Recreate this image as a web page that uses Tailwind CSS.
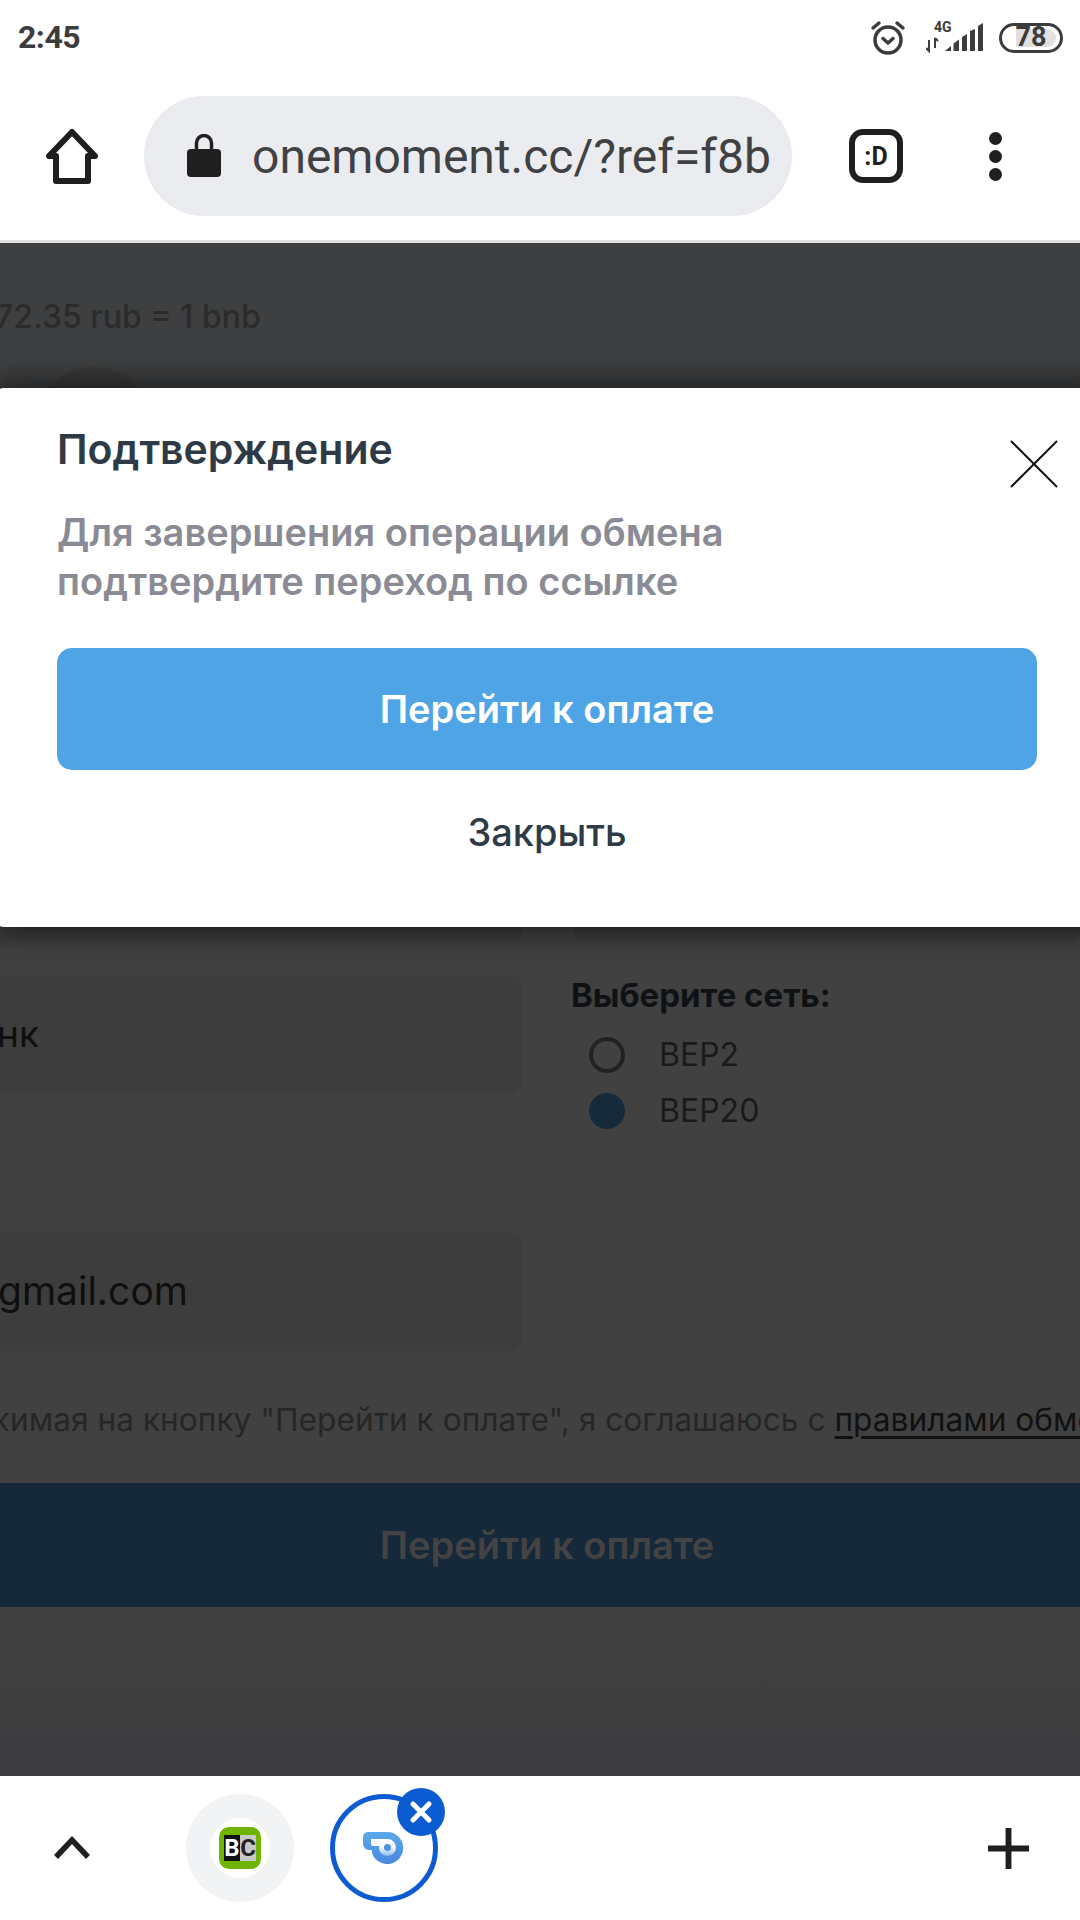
<!DOCTYPE html>
<html lang="ru">
<head>
<meta charset="utf-8">
<script src="https://cdn.jsdelivr.net/npm/@tailwindcss/browser@4"></script>
</head>
<body class="m-0 bg-white">
<div class="relative w-[1080px] h-[1920px] overflow-hidden bg-white flex flex-col font-['Roboto',sans-serif]">

  <!-- status bar -->
  <div class="h-[72px] flex items-center justify-between pl-[18px] pr-[17px] pt-[1px] shrink-0">
    <span class="text-[32px] font-bold text-[#3c3c3c] tracking-[-0.5px]">2:45</span>
    <div class="flex items-center pt-[2px]">
      <svg class="w-[36px] h-[36px]" viewBox="0 0 36 36" fill="none" stroke="#3c3c3c" stroke-width="3.5" stroke-linecap="round" stroke-linejoin="round"><circle cx="18" cy="20" r="13"/><path d="M13 18.500l5 4.500 5-4.500"/><path d="M3 8l6-5M33 8l-6-5"/></svg>
      <svg class="w-[60px] h-[36px] ml-[20px]" viewBox="0 0 60 36">
        <text x="8" y="12" font-family="Roboto" font-weight="700" font-size="14" fill="#3c3c3c">4G</text>
        <path d="M3 20v11M0 28l3 3 0-8M9 18v10M9 18l3 3" stroke="#3c3c3c" stroke-width="2" fill="none"/>
        <path d="M19 31l6-5v5zM27.500 23.500l5.500-4v11.500h-5.500zM36 17l5-3v17h-5zM44 11l5-2v22h-5zM52 6l5-3v28h-5z" fill="#3c3c3c"/>
      </svg>
      <div class="relative w-[64px] h-[30px] ml-[13px] rounded-full border-[3px] border-[#3c3c3c] flex items-center justify-center overflow-hidden">
        <div class="absolute left-[14px] top-[3px] bottom-[3px] w-[40px] bg-[#e0e0e0] rounded-r-full"></div>
        <span class="relative text-[27px] leading-none font-bold text-[#3c3c3c]">78</span>
      </div>
    </div>
  </div>

  <!-- browser toolbar -->
  <div class="h-[168px] flex items-center shrink-0 border-b-[3px] border-[#e2e3e1] box-content">
    <div class="w-[144px] flex justify-center">
      <svg class="w-[56px] h-[56px]" viewBox="0 0 56 56" fill="none" stroke="#1f1f1f" stroke-width="6" stroke-linejoin="round"><path d="M28 4L5 28h7v25h32V28h7z"/></svg>
    </div>
    <div class="w-[648px] h-[120px] rounded-full bg-[#ebecef] flex items-center">
      <svg class="w-[34px] h-[44px] ml-[43px]" viewBox="0 0 34 44"><path d="M9.500 18v-9a7.500 7.500 0 0 1 15 0v9" fill="none" stroke="#1f1f1f" stroke-width="3.500"/><rect x="0" y="15" width="34" height="28" rx="4" fill="#1f1f1f"/></svg>
      <span class="ml-[31px] pt-[2px] text-[48px] leading-none text-[#3f4144] whitespace-nowrap">onemoment.cc/?ref=f8b</span>
    </div>
    <div class="ml-[57px] w-[54px] h-[54px] rounded-[14px] border-[6px] border-[#1f1f1f] flex items-center justify-center">
      <span class="text-[25px] font-bold text-[#1f1f1f] leading-none">:D</span>
    </div>
    <div class="ml-[86px] flex flex-col gap-[5px]">
      <span class="w-[13px] h-[13px] rounded-full bg-[#1f1f1f]"></span>
      <span class="w-[13px] h-[13px] rounded-full bg-[#1f1f1f]"></span>
      <span class="w-[13px] h-[13px] rounded-full bg-[#1f1f1f]"></span>
    </div>
  </div>

  <!-- dimmed page -->
  <div class="relative h-[1533px] shrink-0 overflow-hidden bg-gradient-to-b from-[#414141] via-[#414141] via-[91%] to-[#3b3c3e] font-['Inter','Noto_Sans',sans-serif]">
    <div class="h-[124px] bg-[#3e3f40] pt-[54px]">
      <p class="-ml-[5px] text-[32px] leading-[40px] font-medium text-[#2b2b2b] whitespace-nowrap">72.35 rub = 1 bnb</p>
    </div>
    <div class="h-[458px] bg-[#3e3f40]">
      <div class="ml-[34px] w-[118px] h-[118px] rounded-full bg-[#383939]"></div>
    </div>

    <div class="grid grid-cols-[534px_1fr] gap-x-[52px] -ml-[12px]">
      <div class="flex flex-col">
        <div class="h-[118px] rounded-[12px] bg-[#3d3d3d]"></div>
        <div class="mt-[32px] h-[118px] rounded-[12px] bg-[#3d3d3d] flex items-center text-[37px] text-[#0f0f0f]"><span class="-ml-[3px] pl-[12px]">нк</span></div>
        <div class="mt-[139px] h-[119px] rounded-[12px] bg-[#3d3d3d] flex items-center text-[39px] text-[#0f0f0f]"><span class="pl-[10px]">gmail.com</span></div>
      </div>
      <div class="flex flex-col">
        <div class="h-[118px] rounded-[12px] bg-[#3d3d3d]"></div>
        <p class="mt-[30px] -ml-[3px] text-[33px] leading-[44px] font-bold text-[#0f1114] whitespace-nowrap">Выберите сеть:</p>
        <div class="mt-[16px] ml-[15px] flex items-center gap-[34px] h-[44px]">
          <span class="w-[36px] h-[36px] rounded-full border-[4px] border-[#222222]"></span>
          <span class="text-[32px] text-[#1a1a1a]">BEP2</span>
        </div>
        <div class="mt-[12px] ml-[15px] flex items-center gap-[34px] h-[44px]">
          <span class="w-[36px] h-[36px] rounded-full bg-[#152b3c]"></span>
          <span class="text-[32px] text-[#1a1a1a]">BEP20</span>
        </div>
      </div>
    </div>

    <p class="mt-[49px] -ml-[57px] text-[31.700px] leading-[40px] text-[#262626] whitespace-nowrap">Нажимая на кнопку "Перейти к оплате", я соглашаюсь с <span class="underline decoration-[length:3px] underline-offset-[5px] text-[#111111]">правилами обмена</span></p>

    <div class="mt-[43px] h-[124px] pl-[14px] bg-[#15293a] flex items-center justify-center text-[38px] font-semibold text-[#434343]">Перейти к оплате</div>

    <!-- confirmation modal -->
    <div class="absolute left-[-8px] top-[145px] w-[1120px] h-[539px] bg-white rounded-[12px] shadow-[0_0_34px_rgba(0,0,0,0.75)] pl-[65px] pr-[83px] pt-[34px]">
      <div class="flex items-start justify-between">
        <h2 class="text-[41px] leading-[54px] font-semibold text-[#2e3a46]">Подтверждение</h2>
        <svg class="w-[48px] h-[48px] mt-[18px] -mr-[29px]" viewBox="0 0 48 48" fill="none" stroke="#111111" stroke-width="2"><path d="M1 1l46 46M47 1L1 47"/></svg>
      </div>
      <p class="mt-[20px] text-[38px] leading-[49px] font-semibold text-[#8b8b96] whitespace-nowrap">Для завершения операции обмена<br>подтвердите переход по ссылке</p>
      <div class="mt-[42px] w-[980px] h-[122px] rounded-[15px] bg-[#4fa4e6] flex items-center justify-center text-[38px] font-semibold text-white">Перейти к оплате</div>
      <div class="mt-[32px] w-[980px] text-center text-[38px] leading-[60px] font-medium text-[#2e3a46]">Закрыть</div>
    </div>
  </div>

  <!-- tab strip -->
  <div class="h-[144px] relative flex items-center shrink-0">
    <svg class="ml-[54px] w-[36px] h-[24px]" viewBox="0 0 36 24" fill="none" stroke="#1f1f1f" stroke-width="5.500"><path d="M2 21L18 4l16 17"/></svg>
    <div class="ml-[96px] w-[108px] h-[108px] rounded-full bg-[#f1f3f4] flex items-center justify-center">
      <div class="w-[60px] h-[60px] rounded-full bg-white flex items-center justify-center">
        <div class="w-[42px] h-[42px] rounded-[10px] bg-[#6fb400] flex items-center justify-center">
          <span class="w-[16px] h-[26px] bg-[#111111] text-white text-[24px] leading-[26px] font-bold text-center">B</span>
          <span class="w-[16px] h-[26px] bg-[#c8c8c8] text-[#222222] text-[24px] leading-[26px] font-bold text-center">C</span>
        </div>
      </div>
    </div>
    <div class="relative ml-[36px] w-[108px] h-[108px] rounded-full border-[5px] border-[#0b5bd3] flex items-center justify-center">
      <svg class="w-[42px] h-[32px]" viewBox="0 0 42 32">
        <defs>
          <linearGradient id="wh" x1="0" y1="0" x2="0" y2="1"><stop offset="0" stop-color="#5aaae8"/><stop offset="1" stop-color="#4a88e0"/></linearGradient>
          <linearGradient id="wi" x1="0" y1="0" x2="0" y2="1"><stop offset="0" stop-color="#ffffff"/><stop offset="0.5" stop-color="#f4f8fd"/><stop offset="1" stop-color="#8dbcf0"/></linearGradient>
        </defs>
        <path d="M5 0H24.500A16 16 0 1 1 9 21V18H6A6 6 0 0 1 0 12V5A5 5 0 0 1 5 0z" fill="url(#wh)"/>
        <path d="M8 7H24.500A8.500 8.500 0 1 1 16 15.500V14H10A2 2 0 0 1 8 12z" fill="url(#wi)"/>
        <circle cx="24.500" cy="15.500" r="3.500" fill="#4a92e2"/>
      </svg>
      <div class="absolute -top-[11px] -right-[12px] w-[48px] h-[48px] rounded-full bg-[#0b5bd3] flex items-center justify-center">
        <svg class="w-[24px] h-[24px]" viewBox="0 0 24 24" fill="none" stroke="#ffffff" stroke-width="5" stroke-linecap="round"><path d="M4 4l16 16M20 4L4 20"/></svg>
      </div>
    </div>
    <svg class="ml-[549px] w-[43px] h-[43px]" viewBox="0 0 44 44" fill="none" stroke="#1f1f1f" stroke-width="6"><path d="M22 1v42M1 22h42"/></svg>
  </div>
</div>
</body>
</html>
